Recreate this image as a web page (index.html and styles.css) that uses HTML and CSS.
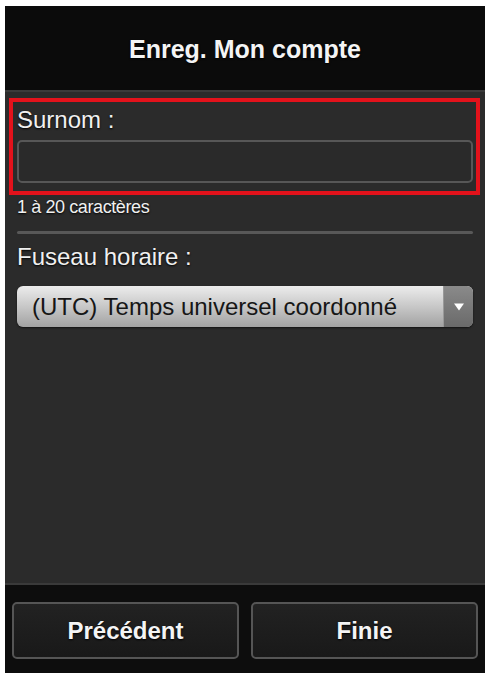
FILE: index.html
```html
<!DOCTYPE html>
<html lang="fr">
<head>
    <meta charset="UTF-8">
    <meta name="viewport" content="width=device-width, initial-scale=1.0">
    <title>Enreg. Mon compte</title>
    <link rel="stylesheet" href="styles.css">
</head>
<body>
    <div class="screen">
        <div class="screen-header">
            <h1>Enreg. Mon compte</h1>
        </div>

        <div class="screen-content">
            <div class="field-highlight">
                <label for="nickname">Surnom :</label>
                <input type="text" id="nickname" name="nickname">
            </div>
            <p class="field-hint">1 à 20 caractères</p>

            <div class="separator"></div>

            <div class="form-group">
                <label for="timezone">Fuseau horaire :</label>
                <div class="select-box">
                    <span class="select-value" id="timezone">(UTC) Temps universel coordonné</span>
                    <span class="select-arrow">
                        <svg width="12" height="10" viewBox="0 0 12 10">
                            <path d="M1 1.5 H11 L6 8.5 Z" fill="#fff"/>
                        </svg>
                    </span>
                </div>
            </div>
        </div>

        <div class="screen-footer">
            <button class="footer-btn">Précédent</button>
            <button class="footer-btn">Finie</button>
        </div>
    </div>
</body>
</html>
```

FILE: styles.css
```css
* {
    margin: 0;
    padding: 0;
    box-sizing: border-box;
}

body {
    background: white;
    padding: 6px 0 0 5px;
    font-family: "Liberation Sans", Arial, sans-serif;
}

.screen {
    height: 667px;
    display: flex;
    flex-direction: column;
    background: #2b2b2b;
    color: #f2f2f2;
}

.screen-header {
    height: 84px;
    background: #0b0b0b;
    display: flex;
    align-items: center;
    justify-content: center;
}

.screen-header h1 {
    font-size: 25px;
    font-weight: bold;
    color: #f4f4f4;
    text-shadow: 0 1px 2px #000;
    margin-top: 2px;
}

.screen-content {
    flex: 1;
    border-top: 2px solid #3a3a3a;
    border-bottom: 2px solid #3a3a3a;
    padding: 6px 5px 0 4px;
}

.field-highlight {
    border: 4px solid #e3121b;
    padding: 4px 3px 8px 4px;
}

.field-highlight label,
.form-group label {
    display: block;
    font-size: 24px;
    line-height: 28px;
    color: #f0f0f0;
    text-shadow: 0 1px 2px #000;
}

.field-highlight input {
    display: block;
    width: 100%;
    height: 43px;
    margin-top: 6px;
    background: #2a2a2a;
    border: 2px solid #575757;
    border-radius: 5px;
    outline: none;
}

.field-hint {
    font-size: 18px;
    line-height: 20px;
    margin: 2px 0 0 8px;
    letter-spacing: -0.4px;
    color: #f0f0f0;
    text-shadow: 0 1px 2px #000;
}

.separator {
    height: 3px;
    background: #585858;
    margin: 14px 7px 0 8px;
    border-radius: 2px;
}

.form-group {
    padding: 9px 7px 0 8px;
}

.select-box {
    display: flex;
    height: 41px;
    margin-top: 15px;
    border-radius: 6px;
    overflow: hidden;
    background: linear-gradient(#ececec, #c4c4c4 55%, #a2a2a2);
    box-shadow: 0 1px 2px rgba(0, 0, 0, 0.6);
}

.select-value {
    flex: 1;
    font-size: 24px;
    line-height: 41px;
    padding-left: 15px;
    color: #161616;
    white-space: nowrap;
}

.select-arrow {
    width: 30px;
    display: flex;
    align-items: center;
    justify-content: center;
    background: linear-gradient(#8a8a8a, #6a6a6a);
    border-left: 1px solid #999;
}

.screen-footer {
    height: 88px;
    background: #0d0d0d;
    display: flex;
    gap: 12px;
    padding: 17px 7px 0 7px;
    align-items: flex-start;
}

.footer-btn {
    flex: 1;
    height: 57px;
    background: linear-gradient(#222, #191919);
    border: 2px solid #555;
    border-radius: 5px;
    color: #f4f4f4;
    font-family: "Liberation Sans", Arial, sans-serif;
    font-size: 24px;
    font-weight: bold;
    text-shadow: 0 1px 2px #000;
    cursor: pointer;
}
```
